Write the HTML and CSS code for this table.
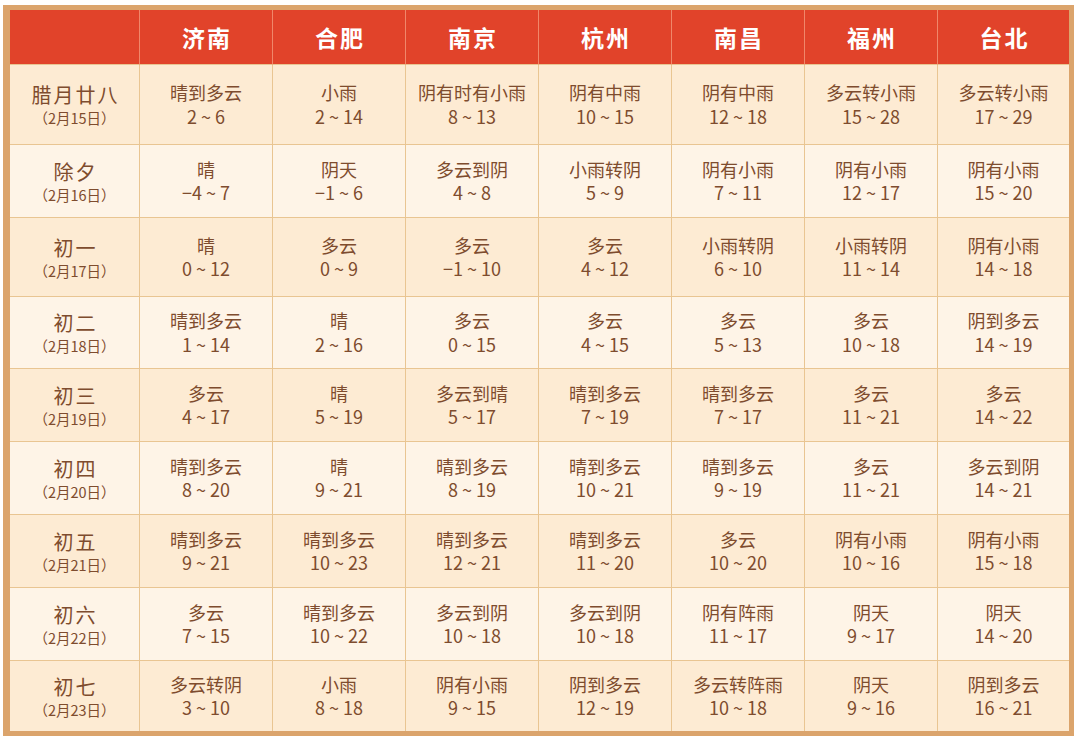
FILE: index.html
```html
<!DOCTYPE html>
<html lang="zh-CN">
<head>
<meta charset="utf-8">
<link rel="stylesheet" href="styles.css">
</head>
<body>
<div class="frame">
  <div class="grid">
    <div class="hd"></div>
    <div class="hd">济南</div>
    <div class="hd">合肥</div>
    <div class="hd">南京</div>
    <div class="hd">杭州</div>
    <div class="hd">南昌</div>
    <div class="hd">福州</div>
    <div class="hd last">台北</div>

    <div class="lb dk"><span class="day">腊月廿八</span><span class="date">（2月15日）</span></div>
    <div class="c dk"><span>晴到多云</span><span>2 ~ 6</span></div>
    <div class="c dk"><span>小雨</span><span>2 ~ 14</span></div>
    <div class="c dk"><span>阴有时有小雨</span><span>8 ~ 13</span></div>
    <div class="c dk"><span>阴有中雨</span><span>10 ~ 15</span></div>
    <div class="c dk"><span>阴有中雨</span><span>12 ~ 18</span></div>
    <div class="c dk"><span>多云转小雨</span><span>15 ~ 28</span></div>
    <div class="c dk last"><span>多云转小雨</span><span>17 ~ 29</span></div>

    <div class="lb lt"><span class="day">除夕</span><span class="date">（2月16日）</span></div>
    <div class="c lt"><span>晴</span><span>−4 ~ 7</span></div>
    <div class="c lt"><span>阴天</span><span>−1 ~ 6</span></div>
    <div class="c lt"><span>多云到阴</span><span>4 ~ 8</span></div>
    <div class="c lt"><span>小雨转阴</span><span>5 ~ 9</span></div>
    <div class="c lt"><span>阴有小雨</span><span>7 ~ 11</span></div>
    <div class="c lt"><span>阴有小雨</span><span>12 ~ 17</span></div>
    <div class="c lt last"><span>阴有小雨</span><span>15 ~ 20</span></div>

    <div class="lb dk"><span class="day">初一</span><span class="date">（2月17日）</span></div>
    <div class="c dk"><span>晴</span><span>0 ~ 12</span></div>
    <div class="c dk"><span>多云</span><span>0 ~ 9</span></div>
    <div class="c dk"><span>多云</span><span>−1 ~ 10</span></div>
    <div class="c dk"><span>多云</span><span>4 ~ 12</span></div>
    <div class="c dk"><span>小雨转阴</span><span>6 ~ 10</span></div>
    <div class="c dk"><span>小雨转阴</span><span>11 ~ 14</span></div>
    <div class="c dk last"><span>阴有小雨</span><span>14 ~ 18</span></div>

    <div class="lb lt"><span class="day">初二</span><span class="date">（2月18日）</span></div>
    <div class="c lt"><span>晴到多云</span><span>1 ~ 14</span></div>
    <div class="c lt"><span>晴</span><span>2 ~ 16</span></div>
    <div class="c lt"><span>多云</span><span>0 ~ 15</span></div>
    <div class="c lt"><span>多云</span><span>4 ~ 15</span></div>
    <div class="c lt"><span>多云</span><span>5 ~ 13</span></div>
    <div class="c lt"><span>多云</span><span>10 ~ 18</span></div>
    <div class="c lt last"><span>阴到多云</span><span>14 ~ 19</span></div>

    <div class="lb dk"><span class="day">初三</span><span class="date">（2月19日）</span></div>
    <div class="c dk"><span>多云</span><span>4 ~ 17</span></div>
    <div class="c dk"><span>晴</span><span>5 ~ 19</span></div>
    <div class="c dk"><span>多云到晴</span><span>5 ~ 17</span></div>
    <div class="c dk"><span>晴到多云</span><span>7 ~ 19</span></div>
    <div class="c dk"><span>晴到多云</span><span>7 ~ 17</span></div>
    <div class="c dk"><span>多云</span><span>11 ~ 21</span></div>
    <div class="c dk last"><span>多云</span><span>14 ~ 22</span></div>

    <div class="lb lt"><span class="day">初四</span><span class="date">（2月20日）</span></div>
    <div class="c lt"><span>晴到多云</span><span>8 ~ 20</span></div>
    <div class="c lt"><span>晴</span><span>9 ~ 21</span></div>
    <div class="c lt"><span>晴到多云</span><span>8 ~ 19</span></div>
    <div class="c lt"><span>晴到多云</span><span>10 ~ 21</span></div>
    <div class="c lt"><span>晴到多云</span><span>9 ~ 19</span></div>
    <div class="c lt"><span>多云</span><span>11 ~ 21</span></div>
    <div class="c lt last"><span>多云到阴</span><span>14 ~ 21</span></div>

    <div class="lb dk"><span class="day">初五</span><span class="date">（2月21日）</span></div>
    <div class="c dk"><span>晴到多云</span><span>9 ~ 21</span></div>
    <div class="c dk"><span>晴到多云</span><span>10 ~ 23</span></div>
    <div class="c dk"><span>晴到多云</span><span>12 ~ 21</span></div>
    <div class="c dk"><span>晴到多云</span><span>11 ~ 20</span></div>
    <div class="c dk"><span>多云</span><span>10 ~ 20</span></div>
    <div class="c dk"><span>阴有小雨</span><span>10 ~ 16</span></div>
    <div class="c dk last"><span>阴有小雨</span><span>15 ~ 18</span></div>

    <div class="lb lt"><span class="day">初六</span><span class="date">（2月22日）</span></div>
    <div class="c lt"><span>多云</span><span>7 ~ 15</span></div>
    <div class="c lt"><span>晴到多云</span><span>10 ~ 22</span></div>
    <div class="c lt"><span>多云到阴</span><span>10 ~ 18</span></div>
    <div class="c lt"><span>多云到阴</span><span>10 ~ 18</span></div>
    <div class="c lt"><span>阴有阵雨</span><span>11 ~ 17</span></div>
    <div class="c lt"><span>阴天</span><span>9 ~ 17</span></div>
    <div class="c lt last"><span>阴天</span><span>14 ~ 20</span></div>

    <div class="lb dk bot"><span class="day">初七</span><span class="date">（2月23日）</span></div>
    <div class="c dk bot"><span>多云转阴</span><span>3 ~ 10</span></div>
    <div class="c dk bot"><span>小雨</span><span>8 ~ 18</span></div>
    <div class="c dk bot"><span>阴有小雨</span><span>9 ~ 15</span></div>
    <div class="c dk bot"><span>阴到多云</span><span>12 ~ 19</span></div>
    <div class="c dk bot"><span>多云转阵雨</span><span>10 ~ 18</span></div>
    <div class="c dk bot"><span>阴天</span><span>9 ~ 16</span></div>
    <div class="c dk bot last"><span>阴到多云</span><span>16 ~ 21</span></div>
  </div>
</div>
</body>
</html>
```

FILE: styles.css
```css
html, body {
  margin: 0;
  padding: 0;
  background: #ffffff;
}
body {
  font-family: "Noto Sans CJK SC", "Noto Sans", sans-serif;
  width: 1080px;
  height: 740px;
  overflow: hidden;
}
.frame {
  margin: 5px 0 0 3px;
  width: 1059px;
  border-style: solid;
  border-color: #dba46c;
  border-width: 5px 5px 5px 7px;
}
.grid {
  display: grid;
  grid-template-columns: 130px repeat(6, 133px) 131px;
  grid-template-rows: 55px 80px 73px 79px 72px 73px 73px 73px 73px 70px;
}
.grid > div {
  box-sizing: border-box;
  border-right: 1.5px solid #e9c592;
  border-bottom: 1.5px solid #e9c592;
  display: flex;
  flex-direction: column;
  align-items: center;
  justify-content: center;
  color: #7e4c2e;
}
.grid > div.last { border-right: none; }
.grid > div.bot { border-bottom: none; }
.hd {
  background: #e1432a;
  color: #ffffff !important;
  font-size: 23px;
  font-weight: 700;
  letter-spacing: 2px;
  padding-left: 2px;
  border-right-color: #f0876a !important;
  border-bottom-color: #e9c592 !important;
}
.dk { background: #fdebd3; }
.lt { background: #fef4e7; }
.lb .day {
  font-size: 20px;
  font-weight: 400;
  line-height: 26px;
  letter-spacing: 2px;
  padding-left: 2px;
}
.lb .date {
  font-size: 14.5px;
  line-height: 19px;
}
.c span {
  font-size: 18px;
  line-height: 23.5px;
  white-space: nowrap;
}
```
